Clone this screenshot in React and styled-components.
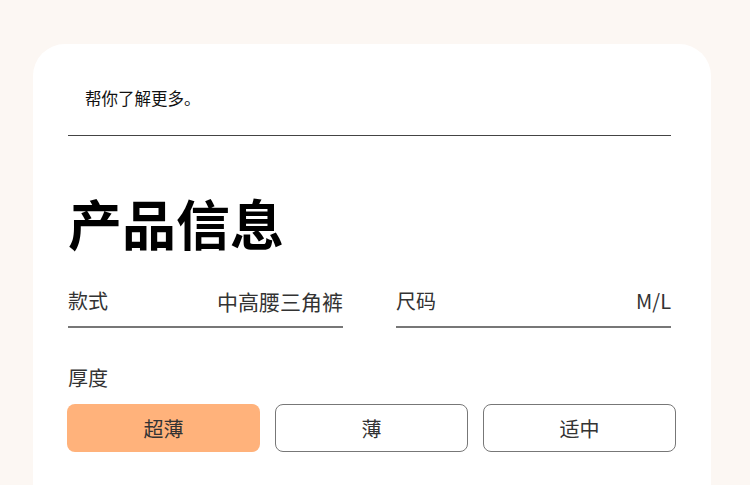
import React from 'react';
import styled, { createGlobalStyle } from 'styled-components';

const GlobalStyle = createGlobalStyle`
  html, body {
    margin: 0;
    padding: 0;
    background: #fcf7f3;
    font-family: "Noto Sans CJK SC", "Noto Sans", sans-serif;
  }
`;

const Page = styled.div`
  height: 485px;
  overflow: hidden;
  padding: 44px 39px 0 33px;
  box-sizing: border-box;
`;

const Card = styled.div`
  background: #fff;
  border-radius: 32px 32px 0 0;
  padding: 35px 35px 40px 35px;
  min-height: 500px;
  box-sizing: border-box;
`;

const Intro = styled.div`
  padding: 8px 0 26px 17px;
  font-size: 16.5px;
  line-height: 22px;
  color: #111;
  border-bottom: 1px solid #444;
  width: 586px;
`;

const Title = styled.h1`
  margin: 55px 0 32px 0;
  font-size: 54px;
  line-height: 64px;
  font-weight: 700;
  color: #000;
`;

const FieldGrid = styled.div`
  display: grid;
  grid-template-columns: 275px 275px;
  column-gap: 53px;
`;

const Field = styled.div`
  display: flex;
  justify-content: space-between;
  align-items: center;
  font-size: 20px;
  line-height: 28px;
  color: #333;
  padding-bottom: 11px;
  border-bottom: 2px solid #777;
`;

const Value = styled.span`
  font-size: 21px;
`;

const Label = styled.div`
  margin-top: 36px;
  font-size: 20px;
  line-height: 28px;
  color: #333;
`;

const Options = styled.div`
  margin-top: 12px;
  display: grid;
  grid-template-columns: repeat(3, 193px);
  column-gap: 15px;
  margin-left: -1px;
`;

const Option = styled.button`
  height: 48px;
  border-radius: 8px;
  box-sizing: border-box;
  font-family: inherit;
  font-size: 20px;
  color: #333;
  background: ${p => (p.active ? '#ffb27b' : '#fff')};
  border: ${p => (p.active ? 'none' : '1.5px solid #777')};
  cursor: pointer;
`;

export default function App() {
  return (
    <>
      <GlobalStyle />
      <Page>
        <Card>
          <Intro>帮你了解更多。</Intro>
          <Title>产品信息</Title>
          <FieldGrid>
            <Field>
              <span>款式</span>
              <Value>中高腰三角裤</Value>
            </Field>
            <Field>
              <span>尺码</span>
              <span>M/L</span>
            </Field>
          </FieldGrid>
          <Label>厚度</Label>
          <Options>
            <Option active>超薄</Option>
            <Option>薄</Option>
            <Option>适中</Option>
          </Options>
        </Card>
      </Page>
    </>
  );
}
